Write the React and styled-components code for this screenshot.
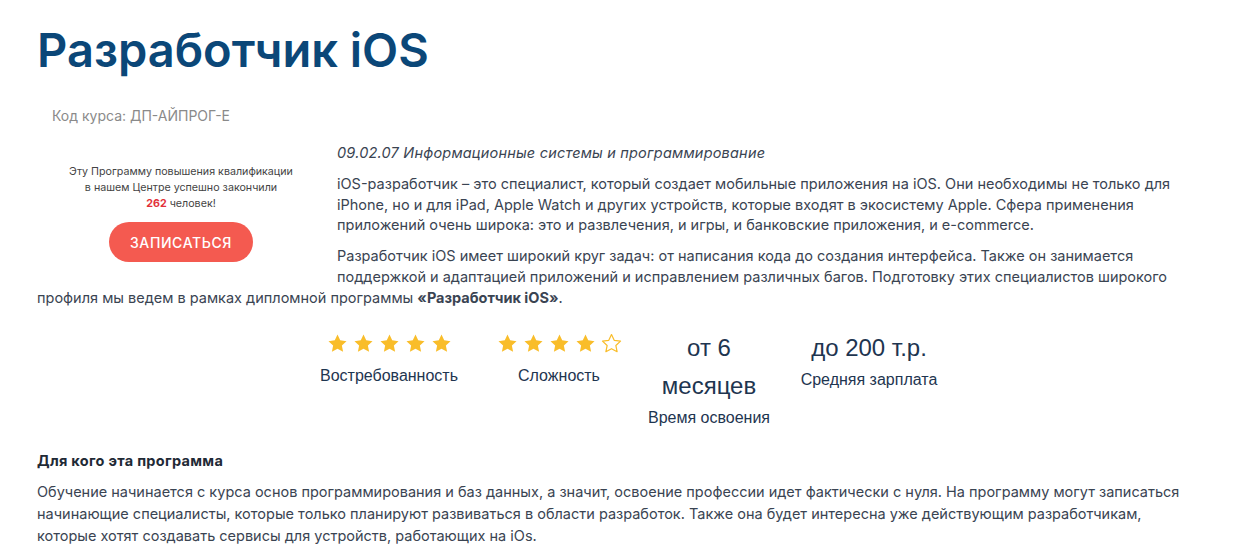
import React from "react";
import styled, { createGlobalStyle } from "styled-components";

const GlobalStyle = createGlobalStyle`
  body {
    margin: 0;
    background: #fff;
    font-family: "Inter", "DejaVu Sans", sans-serif;
  }
`;

const Page = styled.div`
  padding: 22px 37px 0 37px;
  color: #3a4452;
`;

const Title = styled.h1`
  margin: 0;
  font-family: "Inter", sans-serif;
  font-weight: 600;
  font-size: 47px;
  line-height: 56px;
  color: #0b4778;
`;

const CourseCode = styled.div`
  margin: 28px 0 0 15px;
  font-size: 14px;
  line-height: 20px;
  color: #8a8a8a;
`;

const Body = styled.div`
  margin-top: 17px;
`;

const Aside = styled.aside`
  float: left;
  width: 288px;
  margin: 21px 12px 8px 0;
  display: flex;
  flex-direction: column;
  align-items: center;
  text-align: center;
`;

const Notice = styled.p`
  margin: 0;
  font-size: 10.7px;
  line-height: 16px;
  color: #444;
`;

const Count = styled.b`
  color: #e2313a;
  font-weight: 700;
`;

const SignUp = styled.button`
  margin-top: 10px;
  width: 144px;
  height: 40px;
  border: 0;
  border-radius: 20px;
  background: #f45a50;
  color: #fff;
  font-family: "Inter", sans-serif;
  font-size: 14px;
  font-weight: 500;
  letter-spacing: 0.6px;
  text-transform: uppercase;
  cursor: pointer;
`;

const Specialty = styled.p`
  margin: 0 0 11px;
  font-style: italic;
  font-size: 14.5px;
  line-height: 20px;
  letter-spacing: 0.2px;
`;

const Text = styled.p`
  margin: 0 0 10px;
  font-size: 14.5px;
  line-height: 20.7px;
`;

const Stats = styled.div`
  clear: both;
  display: grid;
  grid-template-columns: 170px 170px 130px 190px;
  margin: 21px 0 0 267px;
  font-family: "Liberation Sans", Arial, sans-serif;
  color: #1e3550;
  text-align: center;
`;

const Stat = styled.div`
  display: flex;
  flex-direction: column;
  align-items: center;
`;

const Stars = styled.div`
  display: flex;
  gap: 5px;
  height: 28px;
  align-items: center;
  margin-bottom: 6px;
`;

const Value = styled.div`
  font-size: 24px;
  line-height: 38px;
`;

const Label = styled.div`
  font-size: 16px;
  line-height: 26px;
`;

const SectionTitle = styled.h3`
  margin: 20px 0 0;
  font-size: 14.5px;
  line-height: 20px;
  font-weight: 700;
  letter-spacing: 0.3px;
  color: #1f2a36;
`;

const Lead = styled.p`
  margin: 10px 0 0;
  font-size: 14.5px;
  line-height: 22px;
`;

const Star = ({ filled }) => (
  <svg width="21" height="21" viewBox="0 0 24 24">
    <path
      d="M12 1.8l3.1 6.6 7.2.9-5.3 5 1.4 7.1L12 17.9l-6.4 3.5L7 14.3l-5.3-5 7.2-.9z"
      fill={filled ? "#f9bd2a" : "none"}
      stroke="#f9bd2a"
      strokeWidth={filled ? 0 : 1.4}
      strokeLinejoin="round"
    />
  </svg>
);

const Rating = ({ value }) => (
  <Stars>
    {[1, 2, 3, 4, 5].map((i) => (
      <Star key={i} filled={i <= value} />
    ))}
  </Stars>
);

export default function App() {
  return (
    <Page>
      <GlobalStyle />
      <Title>Разработчик iOS</Title>
      <CourseCode>Код курса: ДП-АЙПРОГ-Е</CourseCode>

      <Body>
        <Aside>
          <Notice>
            Эту Программу повышения квалификации
            <br />
            в нашем Центре успешно закончили
            <br />
            <Count>262</Count> человек!
          </Notice>
          <SignUp type="button">Записаться</SignUp>
        </Aside>

        <Specialty>09.02.07 Информационные системы и программирование</Specialty>
        <Text>
          iOS-разработчик – это специалист, который создает мобильные приложения
          на iOS. Они необходимы не только для iPhone, но и для iPad, Apple Watch
          и других устройств, которые входят в экосистему Apple. Сфера применения
          приложений очень широка: это и развлечения, и игры, и банковские
          приложения, и e-commerce.
        </Text>
        <Text>
          Разработчик iOS имеет широкий круг задач: от написания кода до создания
          интерфейса. Также он занимается поддержкой и адаптацией приложений и
          исправлением различных багов. Подготовку этих специалистов широкого
          профиля мы ведем в рамках дипломной программы{" "}
          <b>«Разработчик iOS»</b>.
        </Text>
      </Body>

      <Stats>
        <Stat>
          <Rating value={5} />
          <Label>Востребованность</Label>
        </Stat>
        <Stat>
          <Rating value={4} />
          <Label>Сложность</Label>
        </Stat>
        <Stat>
          <Value>от 6 месяцев</Value>
          <Label>Время освоения</Label>
        </Stat>
        <Stat>
          <Value>до 200 т.р.</Value>
          <Label>Средняя зарплата</Label>
        </Stat>
      </Stats>

      <SectionTitle>Для кого эта программа</SectionTitle>
      <Lead>
        Обучение начинается с курса основ программирования и баз данных, а
        значит, освоение профессии идет фактически с нуля. На программу могут
        записаться начинающие специалисты, которые только планируют развиваться
        в области разработок. Также она будет интересна уже действующим
        разработчикам, которые хотят создавать сервисы для устройств, работающих
        на iOs.
      </Lead>
    </Page>
  );
}
